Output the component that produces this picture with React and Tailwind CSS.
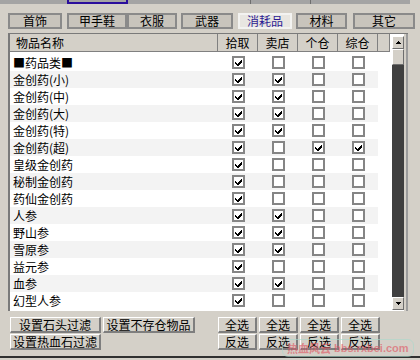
import React from "react";

const tabs = [
  { label: "首饰", cls: "ml-[8px] w-[54px]" },
  { label: "甲手鞋", cls: "ml-[5px] w-[60px]" },
  { label: "衣服", cls: "ml-0 w-[50px]" },
  { label: "武器", cls: "ml-[4px] w-[52px]" },
  { label: "消耗品", cls: "ml-[5px] w-[54px]", active: true },
  { label: "材料", cls: "ml-[4px] w-[51px]" },
  { label: "其它", cls: "ml-[6px] w-[62px]" },
];

// name, 拾取, 卖店, 个仓, 综仓
const items = [
  ["■药品类■", 1, 0, 0, 0],
  ["金创药(小)", 1, 1, 0, 0],
  ["金创药(中)", 1, 1, 0, 0],
  ["金创药(大)", 1, 1, 0, 0],
  ["金创药(特)", 1, 1, 0, 0],
  ["金创药(超)", 1, 0, 1, 1],
  ["皇级金创药", 1, 0, 0, 0],
  ["秘制金创药", 1, 0, 0, 0],
  ["药仙金创药", 1, 0, 0, 0],
  ["人参", 1, 1, 0, 0],
  ["野山参", 1, 1, 0, 0],
  ["雪原参", 1, 1, 0, 0],
  ["益元参", 1, 0, 0, 0],
  ["血参", 1, 1, 0, 0],
  ["幻型人参", 1, 0, 0, 0],
];

const cols = ["拾取", "卖店", "个仓", "综仓"];

const CheckBox = ({ on }) => (
  <span className="w-[13px] h-[13px] border-2 border-[#858585] bg-white flex items-center justify-center">
    {on ? (
      <svg width="9" height="9" viewBox="0 0 9 9" shapeRendering="crispEdges">
        <path d="M1 4h1v1h1v1h1V5h1V4h1V3h1V2h1v3H7v1H6v1H5v1H3V7H2V6H1z" fill="#000" />
      </svg>
    ) : null}
  </span>
);

const Btn = ({ children, className }) => (
  <div
    className={
      "h-[16px] flex items-center justify-center bg-[#d4d0c8] border-t border-l border-t-white border-l-white border-r-2 border-b-2 border-r-[#7e7e7e] border-b-[#7e7e7e] " +
      className
    }
  >
    {children}
  </div>
);

const Arrow = ({ up }) => (
  <div className="h-[13px] flex items-center justify-center bg-[#d4d0c8] border-t border-l border-t-white border-l-white border-r border-b border-r-[#6e6e6e] border-b-[#6e6e6e]">
    <svg width="5" height="3" viewBox="0 0 5 3" shapeRendering="crispEdges">
      {up ? <path d="M2 0h1v1h1v1h1v1H0V2h1V1h1z" fill="#000" /> : <path d="M0 0h5v1H4v1H3v1H2V2H1V1H0z" fill="#000" />}
    </svg>
  </div>
);

export default function App() {
  return (
    <div className="w-[420px] h-[360px] bg-[#d4d0c8] overflow-hidden relative text-[12px] leading-none text-black font-['Noto_Sans_CJK_SC','Noto_Sans_CJK_JP',sans-serif]">
      {/* top strip */}
      <div className="h-[4px] bg-[#a4a4a4] flex">
        <div className="w-[67px]" />
        <div className="w-[61px] border-x-2 border-b-2 border-[#2a0e9c]" />
        <div className="w-[122px]" />
        <div className="w-px bg-[#6e6e6e]" />
        <div className="w-[59px]" />
        <div className="w-px bg-[#6e6e6e]" />
        <div className="w-[99px]" />
        <div className="flex-1 bg-[#d4d0c8]" />
      </div>

      {/* category tabs */}
      <div className="flex mt-[9px] h-[16px]">
        {tabs.map((t) => (
          <div
            key={t.label}
            className={
              t.cls +
              (t.active
                ? " h-[16px] flex items-center justify-center border-2 border-[#f3f3f1] bg-[#e8e6e1] text-[#2b1a93]"
                : " h-[16px] flex items-center justify-center border-2 border-[#8a8a8a] bg-[#c8c4bc]")
            }
          >
            {t.label}
          </div>
        ))}
      </div>

      {/* list */}
      <div className="mt-[4px] ml-[8px] w-[400px] h-[278px] flex bg-white border-l-2 border-t border-[#7a7a7a]">
        <div className="w-[380px] flex flex-col">
          <div className="h-[18px] flex bg-[#d4d0c8] border-b border-[#808080]">
            <div className="w-[208px] pl-[6px] flex items-center border-r border-[#808080]">物品名称</div>
            {cols.map((c) => (
              <div key={c} className="w-[40px] flex items-center justify-center border-r border-[#808080]">
                {c}
              </div>
            ))}
            <div className="w-[12px] border-r border-[#808080]" />
          </div>
          <div className="pt-[2px]">
            {items.map((row, i) => (
              <div
                key={row[0]}
                className={"w-[368px] h-[17px] flex items-center " + (i % 2 ? "bg-[#f3f3f3]" : "bg-white")}
              >
                <div className="w-[208px] pl-[3px]">{row[0]}</div>
                {row.slice(1).map((v, j) => (
                  <div key={j} className="w-[40px] flex justify-center">
                    <CheckBox on={v} />
                  </div>
                ))}
              </div>
            ))}
          </div>
        </div>
        <div className="w-[2px]" />
        {/* scrollbar */}
        <div className="w-[12px] flex flex-col pt-[2px] pb-[1px] bg-white">
          <Arrow up />
          <div className="h-[16px] bg-[#d4d0c8] border-t border-l border-t-white border-l-white border-r border-b border-r-[#6e6e6e] border-b-[#6e6e6e]" />
          <div className="flex-1 bg-[#404040]" />
          <Arrow />
        </div>
        <div className="w-[4px] bg-[#d4d0c8] border-r-2 border-[#9c9c9c]" />
      </div>

      {/* bottom buttons */}
      <div className="flex mt-[6px]">
        <div className="ml-[10px] flex flex-col gap-[1px]">
          <div className="flex gap-[2px]">
            <Btn className="w-[91px]">设置石头过滤</Btn>
            <Btn className="w-[92px]">设置不存仓物品</Btn>
          </div>
          <Btn className="w-[91px]">设置热血石过滤</Btn>
        </div>
        <div className="ml-[23px] grid grid-cols-4 gap-x-[2px] gap-y-[1px]">
          {["全选", "全选", "全选", "全选", "反选", "反选", "反选", "反选"].map((l, i) => (
            <Btn key={i} className="w-[39px]">
              {l}
            </Btn>
          ))}
        </div>
      </div>
      <div className="mt-[6px] h-[2px] bg-[#303030]" />

      {/* watermark */}
      <div className="absolute left-[282px] top-[339px] h-[18px] px-[4px] flex items-center gap-[3px] whitespace-nowrap rounded-[6px] border border-[#a8d8cc]/60 text-[#e0505f]/60 text-[11px] font-bold font-['Liberation_Sans','Noto_Sans_CJK_SC',sans-serif]">
        <span className="font-['Noto_Sans_CJK_SC',sans-serif]">热血风云</span>
        <span>bbs.rxbei.com</span>
      </div>
    </div>
  );
}
